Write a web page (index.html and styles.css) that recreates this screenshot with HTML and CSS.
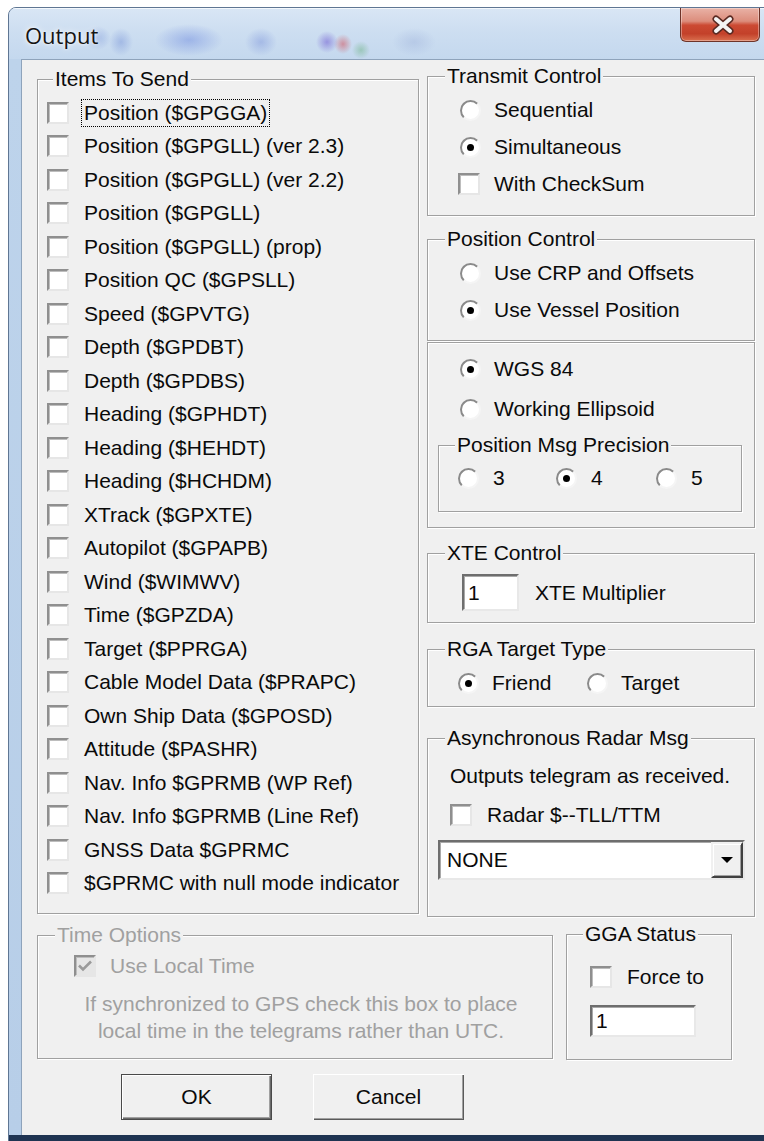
FILE: index.html
```html
<!DOCTYPE html>
<html lang="en">
<head>
<meta charset="utf-8">
<title>Output</title>
<link rel="stylesheet" href="styles.css">
</head>
<body>
<div class="window">
  <div class="titlebar">
    <span class="caption">Output</span>
    <div class="close-btn">
      <svg width="24" height="20" viewBox="0 0 24 20">
        <path class="x-outline" d="M5 4 L19 16 M19 4 L5 16"/>
        <path class="x-fill" d="M5 4 L19 16 M19 4 L5 16"/>
      </svg>
    </div>
  </div>
  <div class="frame">
    <div class="client">
      <div class="top-row">
        <fieldset class="group items">
          <legend>Items To Send</legend>
          <ul class="item-list">
            <li class="item"><span class="cb"></span><span class="lbl focus">Position ($GPGGA)</span></li>
            <li class="item"><span class="cb"></span><span class="lbl">Position ($GPGLL) (ver 2.3)</span></li>
            <li class="item"><span class="cb"></span><span class="lbl">Position ($GPGLL) (ver 2.2)</span></li>
            <li class="item"><span class="cb"></span><span class="lbl">Position ($GPGLL)</span></li>
            <li class="item"><span class="cb"></span><span class="lbl">Position ($GPGLL) (prop)</span></li>
            <li class="item"><span class="cb"></span><span class="lbl">Position QC ($GPSLL)</span></li>
            <li class="item"><span class="cb"></span><span class="lbl">Speed ($GPVTG)</span></li>
            <li class="item"><span class="cb"></span><span class="lbl">Depth ($GPDBT)</span></li>
            <li class="item"><span class="cb"></span><span class="lbl">Depth ($GPDBS)</span></li>
            <li class="item"><span class="cb"></span><span class="lbl">Heading ($GPHDT)</span></li>
            <li class="item"><span class="cb"></span><span class="lbl">Heading ($HEHDT)</span></li>
            <li class="item"><span class="cb"></span><span class="lbl">Heading ($HCHDM)</span></li>
            <li class="item"><span class="cb"></span><span class="lbl">XTrack ($GPXTE)</span></li>
            <li class="item"><span class="cb"></span><span class="lbl">Autopilot ($GPAPB)</span></li>
            <li class="item"><span class="cb"></span><span class="lbl">Wind ($WIMWV)</span></li>
            <li class="item"><span class="cb"></span><span class="lbl">Time ($GPZDA)</span></li>
            <li class="item"><span class="cb"></span><span class="lbl">Target ($PPRGA)</span></li>
            <li class="item"><span class="cb"></span><span class="lbl">Cable Model Data ($PRAPC)</span></li>
            <li class="item"><span class="cb"></span><span class="lbl">Own Ship Data ($GPOSD)</span></li>
            <li class="item"><span class="cb"></span><span class="lbl">Attitude ($PASHR)</span></li>
            <li class="item"><span class="cb"></span><span class="lbl">Nav. Info $GPRMB (WP Ref)</span></li>
            <li class="item"><span class="cb"></span><span class="lbl">Nav. Info $GPRMB (Line Ref)</span></li>
            <li class="item"><span class="cb"></span><span class="lbl">GNSS Data $GPRMC</span></li>
            <li class="item"><span class="cb"></span><span class="lbl">$GPRMC with null mode indicator</span></li>
          </ul>
        </fieldset>

        <div class="right-col">
          <fieldset class="group transmit">
            <legend>Transmit Control</legend>
            <div class="opt"><span class="rb"></span><span>Sequential</span></div>
            <div class="opt"><span class="rb on"></span><span>Simultaneous</span></div>
            <div class="opt opt-cb"><span class="cb"></span><span>With CheckSum</span></div>
          </fieldset>

          <fieldset class="group poscontrol">
            <legend>Position Control</legend>
            <div class="opt"><span class="rb"></span><span>Use CRP and Offsets</span></div>
            <div class="opt"><span class="rb on"></span><span>Use Vessel Position</span></div>
          </fieldset>

          <div class="group plain datum">
            <div class="opt tall"><span class="rb on"></span><span>WGS 84</span></div>
            <div class="opt tall"><span class="rb"></span><span>Working Ellipsoid</span></div>
            <fieldset class="group precision">
              <legend>Position Msg Precision</legend>
              <div class="prec-row">
                <div class="prec-cell"><span class="rb"></span><span>3</span></div>
                <div class="prec-cell"><span class="rb on"></span><span>4</span></div>
                <div class="prec-cell"><span class="rb"></span><span>5</span></div>
              </div>
            </fieldset>
          </div>

          <fieldset class="group xte">
            <legend>XTE Control</legend>
            <div class="xte-row">
              <span class="edit xte-edit">1</span>
              <span class="xte-label">XTE Multiplier</span>
            </div>
          </fieldset>

          <fieldset class="group rga">
            <legend>RGA Target Type</legend>
            <div class="rga-row">
              <div class="rga-cell"><span class="rb on"></span><span>Friend</span></div>
              <div class="rga-cell"><span class="rb"></span><span>Target</span></div>
            </div>
          </fieldset>

          <fieldset class="group radar">
            <legend>Asynchronous Radar Msg</legend>
            <div class="radar-note">Outputs telegram as received.</div>
            <div class="radar-cb"><span class="cb"></span><span>Radar $--TLL/TTM</span></div>
            <div class="combo">
              <span class="combo-text">NONE</span>
              <span class="combo-btn"><span class="arrow"></span></span>
            </div>
          </fieldset>
        </div>
      </div>

      <div class="mid-row">
        <fieldset class="group timeopts disabled">
          <legend>Time Options</legend>
          <div class="time-cb">
            <span class="cb checked">
              <svg width="16" height="16" viewBox="0 0 16 16"><path d="M2 7.5 L6 11.5 L14 3.5" /></svg>
            </span>
            <span>Use Local Time</span>
          </div>
          <p class="time-note">If synchronized to GPS check this box to place<br>local time in the telegrams rather than UTC.</p>
        </fieldset>

        <fieldset class="group gga">
          <legend>GGA Status</legend>
          <div class="gga-cb"><span class="cb"></span><span>Force to</span></div>
          <span class="edit gga-edit">1</span>
        </fieldset>
      </div>

      <div class="buttons">
        <div class="btn default">OK</div>
        <div class="btn">Cancel</div>
      </div>
    </div>
  </div>
</div>
</body>
</html>
```

FILE: styles.css
```css
* {
  box-sizing: border-box;
}

html,
body {
  margin: 0;
  padding: 0;
  overflow: hidden;
}

body {
  width: 764px;
  height: 1141px;
  background: #ffffff;
  font-family: "Liberation Sans", Arial, sans-serif;
  font-size: 21px;
  color: #0a0a0a;
}

/* ---------- window chrome ---------- */

.window {
  margin: 7px 0 0 8px;
  width: 780px;
  height: 1150px;
  border: 1px solid #5f7693;
  border-radius: 8px 8px 0 0;
  display: flex;
  flex-direction: column;
  background: #bcd2eb;
  overflow: hidden;
}

.titlebar {
  height: 51px;
  flex: none;
  display: flex;
  align-items: flex-start;
  background:
    radial-gradient(ellipse 14px 12px at 88px 30px, rgba(110, 140, 215, 0.40), transparent),
    radial-gradient(ellipse 12px 14px at 112px 34px, rgba(100, 130, 210, 0.38), transparent),
    radial-gradient(ellipse 34px 16px at 180px 32px, rgba(95, 125, 220, 0.42), transparent),
    radial-gradient(ellipse 16px 14px at 252px 34px, rgba(110, 135, 215, 0.40), transparent),
    radial-gradient(ellipse 11px 11px at 318px 34px, rgba(110, 90, 210, 0.55), transparent),
    radial-gradient(ellipse 9px 10px at 334px 36px, rgba(210, 70, 80, 0.50), transparent),
    radial-gradient(ellipse 9px 9px at 352px 42px, rgba(90, 170, 110, 0.40), transparent),
    radial-gradient(ellipse 22px 14px at 405px 34px, rgba(140, 160, 210, 0.30), transparent),
    linear-gradient(#d9e6f5 0%, #cddef1 45%, #c4d8ee 100%);
  box-shadow: inset 0 1px 0 rgba(255, 255, 255, 0.7);
}

.caption {
  padding: 12px 0 0 16px;
  font-family: "Open Sans", "Noto Sans", sans-serif;
  font-size: 22px;
  line-height: 30px;
  color: #141414;
  text-shadow: 0 0 7px rgba(255, 255, 255, 0.95), 0 0 3px rgba(255, 255, 255, 0.9);
}

.close-btn {
  margin-left: auto;
  margin-right: 27px;
  width: 80px;
  height: 34px;
  border: 1px solid #6e3429;
  border-top: none;
  border-radius: 0 0 6px 6px;
  background: linear-gradient(#e9b2a6 0%, #dc8d7c 40%, #cc4a33 52%, #c3412a 78%, #d9704f 100%);
  box-shadow: inset 0 0 0 1px rgba(255, 255, 255, 0.35);
  display: flex;
  align-items: center;
  justify-content: center;
  padding-left: 6px;
}

.x-outline {
  stroke: #5b2a22;
  stroke-width: 7;
  stroke-linecap: round;
  fill: none;
}

.x-fill {
  stroke: #f4f4f4;
  stroke-width: 4;
  stroke-linecap: round;
  fill: none;
}

.frame {
  flex: 1;
  display: flex;
  padding-left: 12px;
  background: linear-gradient(to bottom, #bdd3eb 0, #b7cee8 1076px, #1f3452 1076px);
}

.client {
  width: 780px;
  height: 1076px;
  flex: none;
  background: #f0f0f0;
  border-top: 1px solid #8ea3bb;
  border-left: 1px solid #8ea3bb;
  display: flex;
  flex-direction: column;
  padding-left: 15px;
}

/* ---------- group boxes ---------- */

.group {
  margin: 0;
  padding: 0;
  min-width: 0;
  border: 1px solid #a0a0a0;
  box-shadow: 1px 1px 0 #ffffff, inset 1px 1px 0 #ffffff;
}

.group > legend {
  padding: 0 2px;
  line-height: 24px;
  background: #f0f0f0;
}

.top-row {
  display: flex;
  align-items: flex-start;
  gap: 8px;
}

.right-col {
  width: 328px;
  display: flex;
  flex-direction: column;
}

.right-col > .group {
  width: 328px;
}

/* ---------- common controls ---------- */

.cb {
  width: 22px;
  height: 22px;
  flex: none;
  background: #ffffff;
  border: 2px solid;
  border-color: #8f8f8f #e6e6e6 #e6e6e6 #8f8f8f;
  box-shadow: inset 1px 1px 0 #bdbdbd;
  display: flex;
  align-items: center;
  justify-content: center;
}

.rb {
  width: 21px;
  height: 21px;
  flex: none;
  border-radius: 50%;
  background: #ffffff;
  border: 2px solid;
  border-color: #8a8a8a #f5f5f5 #f5f5f5 #8a8a8a;
  display: flex;
  align-items: center;
  justify-content: center;
}

.rb.on::after {
  content: "";
  width: 7px;
  height: 7px;
  border-radius: 50%;
  background: #000;
}

.edit {
  display: flex;
  align-items: center;
  background: #ffffff;
  border: 2px solid;
  border-color: #6e6e6e #e8e8e8 #e8e8e8 #6e6e6e;
  box-shadow: inset 1px 1px 0 #a9a9a9;
  padding-left: 4px;
}

/* ---------- items to send ---------- */

.items {
  width: 382px;
  margin-top: 7px;
  padding: 5px 0 13px 0;
}

.items > legend {
  margin-left: 15px;
}

.item-list {
  list-style: none;
  margin: 0;
  padding: 0;
}

.item {
  height: 33.5px;
  display: flex;
  align-items: center;
  padding-left: 9px;
}

.item .cb {
  margin-right: 15px;
}

.lbl.focus {
  margin-left: -3px;
  padding: 0 2px;
  line-height: 26px;
  border: 1px dotted #000;
}

/* ---------- right column groups ---------- */

.opt {
  height: 37px;
  display: flex;
  align-items: center;
  padding-left: 32px;
}

.opt .rb {
  margin-right: 13px;
}

.opt-cb {
  padding-left: 30px;
}

.opt-cb .cb {
  margin-right: 14px;
}

.transmit {
  margin-top: 4px;
  padding: 3.5px 0 12.5px 0;
}

.transmit > legend,
.poscontrol > legend,
.xte > legend,
.rga > legend,
.radar > legend {
  margin-left: 17px;
}

.poscontrol {
  margin-top: 11px;
  padding: 3.5px 0 11.5px 0;
}

.datum {
  margin-top: 1px;
  padding: 6px 0 15px 0;
}

.opt.tall {
  height: 40px;
}

.precision {
  margin: 4px 0 0 10px;
  width: 304px;
  padding: 6px 0 18px 19px;
}

.precision > legend {
  margin-left: -3px;
}

.prec-row {
  display: grid;
  grid-template-columns: 98px 100px auto;
  height: 30px;
}

.prec-cell {
  display: flex;
  align-items: center;
}

.prec-cell .rb {
  margin-right: 14px;
}

.xte {
  margin-top: 13px;
  padding: 9px 0 11px 34px;
}

.xte > legend {
  margin-left: -17px;
}

.xte-row {
  display: flex;
  align-items: center;
}

.xte-edit {
  width: 57px;
  height: 37px;
}

.xte-label {
  margin-left: 16px;
}

.rga {
  margin-top: 14px;
  padding: 7px 0 8px 30px;
}

.rga > legend {
  margin-left: -13px;
}

.rga-row {
  display: grid;
  grid-template-columns: 129px auto;
  height: 30px;
}

.rga-cell {
  display: flex;
  align-items: center;
}

.rga-cell .rb {
  margin-right: 13px;
}

.radar {
  margin-top: 19px;
  padding: 11px 0 36px 10px;
}

.radar > legend {
  margin-left: 7px;
}

.radar-note {
  height: 30px;
  display: flex;
  align-items: center;
  margin-left: 12px;
}

.radar-cb {
  height: 30px;
  margin: 9px 0 0 12px;
  display: flex;
  align-items: center;
}

.radar-cb .cb {
  margin-right: 15px;
}

.combo {
  margin-top: 10px;
  width: 307px;
  height: 40px;
  display: flex;
  align-items: center;
  background: #ffffff;
  border: 2px solid;
  border-color: #6e6e6e #e8e8e8 #e8e8e8 #6e6e6e;
  box-shadow: inset 1px 1px 0 #a9a9a9;
}

.combo-text {
  flex: 1;
  padding-left: 7px;
}

.combo-btn {
  width: 32px;
  height: 36px;
  flex: none;
  background: #f0f0f0;
  border: 2px solid;
  border-color: #f0f0f0 #404040 #404040 #f0f0f0;
  box-shadow: inset 1px 1px 0 #ffffff, inset -1px -1px 0 #a0a0a0;
  display: flex;
  align-items: center;
  justify-content: center;
}

.arrow {
  width: 0;
  height: 0;
  border-left: 6px solid transparent;
  border-right: 6px solid transparent;
  border-top: 6px solid #000;
}

/* ---------- lower row ---------- */

.mid-row {
  margin-top: 5px;
  display: flex;
  align-items: flex-start;
}

.timeopts {
  width: 516px;
  margin-top: 1px;
  padding: 4px 0 14.5px 0;
}

.timeopts > legend {
  margin-left: 17px;
}

.disabled {
  color: #a0a0a0;
}

.time-cb {
  height: 30px;
  padding-left: 36px;
  display: flex;
  align-items: center;
}

.time-cb .cb {
  margin-right: 14px;
}

.cb.checked {
  background: #e6e6e6;
}

.cb.checked path {
  fill: none;
  stroke: #9a9a9a;
  stroke-width: 2.6;
}

.time-note {
  margin: 8.5px 0 0 12px;
  text-align: center;
  line-height: 27px;
}

.gga {
  width: 166px;
  margin-left: 13px;
  padding: 16px 0 22px 23px;
}

.gga > legend {
  margin-left: -7px;
}

.gga-cb {
  height: 30px;
  display: flex;
  align-items: center;
}

.gga-cb .cb {
  margin-right: 15px;
}

.gga-edit {
  margin-top: 13px;
  width: 106px;
  height: 32px;
}

/* ---------- buttons ---------- */

.buttons {
  margin-top: 14px;
  padding-left: 84px;
  display: flex;
  gap: 41px;
}

.btn {
  width: 151px;
  height: 46px;
  display: flex;
  align-items: center;
  justify-content: center;
  background: #f0f0f0;
  box-shadow: inset 1px 1px 0 #ffffff, inset -1px -1px 0 #5a5a5a, inset -2px -2px 0 #a0a0a0;
}

.btn.default {
  border: 1px solid #4a4a4a;
  box-shadow: inset 1px 1px 0 #ffffff, inset -1px -1px 0 #6a6a6a, inset -2px -2px 0 #a0a0a0;
}
```
